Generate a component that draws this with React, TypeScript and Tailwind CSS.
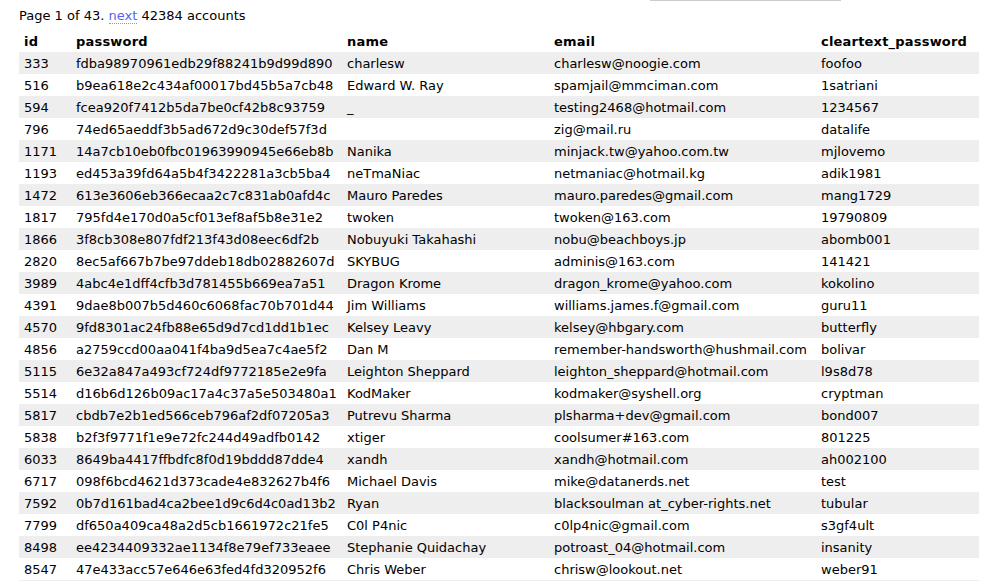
import React from "react";

const rows: [string, string, string, string, string][] = [
  ["333", "fdba98970961edb29f88241b9d99d890", "charlesw", "charlesw@noogie.com", "foofoo"],
  ["516", "b9ea618e2c434af00017bd45b5a7cb48", "Edward W. Ray", "spamjail@mmciman.com", "1satriani"],
  ["594", "fcea920f7412b5da7be0cf42b8c93759", "_", "testing2468@hotmail.com", "1234567"],
  ["796", "74ed65aeddf3b5ad672d9c30def57f3d", "", "zig@mail.ru", "datalife"],
  ["1171", "14a7cb10eb0fbc01963990945e66eb8b", "Nanika", "minjack.tw@yahoo.com.tw", "mjlovemo"],
  ["1193", "ed453a39fd64a5b4f3422281a3cb5ba4", "neTmaNiac", "netmaniac@hotmail.kg", "adik1981"],
  ["1472", "613e3606eb366ecaa2c7c831ab0afd4c", "Mauro Paredes", "mauro.paredes@gmail.com", "mang1729"],
  ["1817", "795fd4e170d0a5cf013ef8af5b8e31e2", "twoken", "twoken@163.com", "19790809"],
  ["1866", "3f8cb308e807fdf213f43d08eec6df2b", "Nobuyuki Takahashi", "nobu@beachboys.jp", "abomb001"],
  ["2820", "8ec5af667b7be97ddeb18db02882607d", "SKYBUG", "adminis@163.com", "141421"],
  ["3989", "4abc4e1dff4cfb3d781455b669ea7a51", "Dragon Krome", "dragon_krome@yahoo.com", "kokolino"],
  ["4391", "9dae8b007b5d460c6068fac70b701d44", "Jim Williams", "williams.james.f@gmail.com", "guru11"],
  ["4570", "9fd8301ac24fb88e65d9d7cd1dd1b1ec", "Kelsey Leavy", "kelsey@hbgary.com", "butterfly"],
  ["4856", "a2759ccd00aa041f4ba9d5ea7c4ae5f2", "Dan M", "remember-handsworth@hushmail.com", "bolivar"],
  ["5115", "6e32a847a493cf724df9772185e2e9fa", "Leighton Sheppard", "leighton_sheppard@hotmail.com", "l9s8d78"],
  ["5514", "d16b6d126b09ac17a4c37a5e503480a1", "KodMaker", "kodmaker@syshell.org", "cryptman"],
  ["5817", "cbdb7e2b1ed566ceb796af2df07205a3", "Putrevu Sharma", "plsharma+dev@gmail.com", "bond007"],
  ["5838", "b2f3f9771f1e9e72fc244d49adfb0142", "xtiger", "coolsumer#163.com", "801225"],
  ["6033", "8649ba4417ffbdfc8f0d19bddd87dde4", "xandh", "xandh@hotmail.com", "ah002100"],
  ["6717", "098f6bcd4621d373cade4e832627b4f6", "Michael Davis", "mike@datanerds.net", "test"],
  ["7592", "0b7d161bad4ca2bee1d9c6d4c0ad13b2", "Ryan", "blacksoulman at_cyber-rights.net", "tubular"],
  ["7799", "df650a409ca48a2d5cb1661972c21fe5", "C0l P4nic", "c0lp4nic@gmail.com", "s3gf4ult"],
  ["8498", "ee4234409332ae1134f8e79ef733eaee", "Stephanie Quidachay", "potroast_04@hotmail.com", "insanity"],
  ["8547", "47e433acc57e646e63fed4fd320952f6", "Chris Weber", "chrisw@lookout.net", "weber91"],
];

export default function App() {
  return (
    <div
      className="min-h-[581px] bg-white text-black text-[13px] leading-[16px] pl-[19px]"
      style={{ fontFamily: '"DejaVu Sans", Verdana, sans-serif' }}
    >
      <div className="h-px w-[191px] ml-[631px] bg-[#cccccc]" />
      <p className="mt-[7px] whitespace-nowrap">
        Page 1 of 43.{" "}
        <a className="text-[#5566ee] border-b border-dotted border-[#8899cc] cursor-pointer">next</a>{" "}
        42384 accounts
      </p>
      <table className="mt-[6px] w-[960px] table-fixed border-collapse">
        <colgroup>
          <col className="w-[52px]" />
          <col className="w-[271px]" />
          <col className="w-[207px]" />
          <col className="w-[267px]" />
          <col className="w-[163px]" />
        </colgroup>
        <thead>
          <tr className="h-[22px]">
            {["id", "password", "name", "email", "cleartext_password"].map((h) => (
              <th
                key={h}
                className="pl-[5px] pr-0 pt-[4px] pb-[2px] align-top text-left font-bold whitespace-nowrap tracking-[0.2px]"
              >
                {h}
              </th>
            ))}
          </tr>
        </thead>
        <tbody>
          {rows.map((r, i) => (
            <tr key={r[0]} className={i % 2 === 0 ? "h-[22px] bg-[#eeeeee]" : "h-[22px] bg-white"}>
              {r.map((c, j) => (
                <td key={j} className="pl-[5px] pr-0 pt-[4px] pb-[2px] align-top whitespace-nowrap overflow-hidden">
                  {c}
                </td>
              ))}
            </tr>
          ))}
          <tr className="h-[22px] bg-[#eeeeee]">
            <td colSpan={5} />
          </tr>
        </tbody>
      </table>
    </div>
  );
}
